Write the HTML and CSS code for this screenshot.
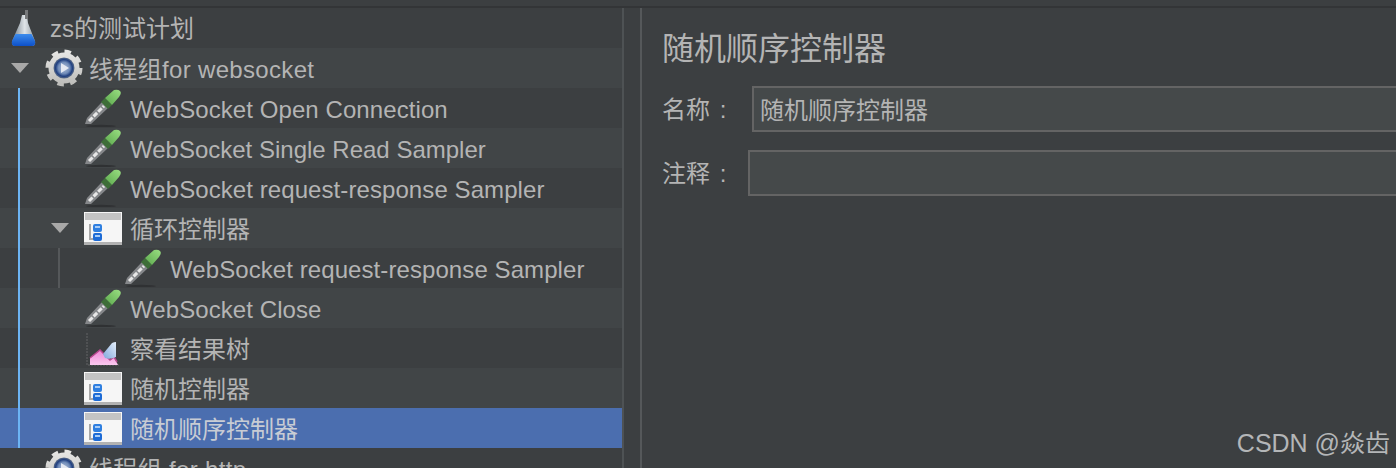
FILE: index.html
```html
<!DOCTYPE html>
<html lang="en">

<head>
    <meta charset="UTF-8">
    <meta name="viewport" content="width=device-width, initial-scale=1.0">
    <title>zs的测试计划</title>

    <link rel="stylesheet" href="styles.css">
</head>

<body>
    <svg class="icon-defs" width="0" height="0">
        <defs>
            <linearGradient id="liquid" x1="0" y1="0" x2="0" y2="1">
                <stop offset="0" stop-color="#3d8cec"/>
                <stop offset="1" stop-color="#0d50c8"/>
            </linearGradient>
            <linearGradient id="glass" x1="0" y1="0" x2="1" y2="0">
                <stop offset="0" stop-color="#6f7a84"/>
                <stop offset="0.55" stop-color="#dfe4e8"/>
                <stop offset="1" stop-color="#8f99a1"/>
            </linearGradient>
            <linearGradient id="bulb" x1="0" y1="1" x2="1" y2="0">
                <stop offset="0" stop-color="#5aa84c"/>
                <stop offset="1" stop-color="#9ade82"/>
            </linearGradient>
            <linearGradient id="pink" x1="0" y1="0" x2="0" y2="1">
                <stop offset="0" stop-color="#ee86d6"/>
                <stop offset="1" stop-color="#fbc8ef"/>
            </linearGradient>
            <linearGradient id="drop" x1="0" y1="1" x2="1" y2="0">
                <stop offset="0" stop-color="#7fa8dc"/>
                <stop offset="1" stop-color="#e4eefa"/>
            </linearGradient>
            <linearGradient id="tooth" x1="0" y1="0" x2="0" y2="1">
                <stop offset="0" stop-color="#e6e6e4"/>
                <stop offset="1" stop-color="#bdbdba"/>
            </linearGradient>
            <radialGradient id="gear-core">
                <stop offset="0" stop-color="#b4c2da"/>
                <stop offset="0.55" stop-color="#6f8bb8"/>
                <stop offset="0.8" stop-color="#1f3f80"/>
                <stop offset="1" stop-color="#5f6f88"/>
            </radialGradient>

            <symbol id="i-flask" viewBox="0 0 28 38">
                <path d="M12 6L17 6 18 14 25 32Q26 37 22 37L5 37Q1 37 2 32L10 14z" fill="url(#glass)"/>
                <path d="M5.500 25L21.500 25 25 32Q26 37 22 37L5 37Q1 37 2 32z" fill="url(#liquid)"/>
                <path d="M15 1h3v9h-3z" fill="#77797b"/>
            </symbol>

            <symbol id="i-gear" viewBox="0 0 38 38">
                <circle cx="19" cy="19" r="15.500" fill="url(#tooth)"/>
                <circle cx="19" cy="19" r="16.500" fill="none" stroke="url(#tooth)" stroke-width="4" stroke-dasharray="6.500 6.460"/>
                <circle cx="19" cy="19" r="10.500" fill="url(#gear-core)"/>
                <path d="M16 14l8 5-8 5z" fill="#e4e9f2"/>
            </symbol>

            <symbol id="i-dropper" viewBox="0 0 38 38">
                <ellipse cx="17" cy="37" rx="15" ry="1.200" fill="#2f3133"/>
                <path d="M1 35L3 29 18 13 24 19 7 35z" fill="#85878a"/>
                <path d="M5 32L20 17" fill="none" stroke="#e8e8e8" stroke-width="3" stroke-dasharray="5 1.500"/>
                <path d="M17 13L21 9 28 16 24 20z" fill="#3e6e38"/>
                <path d="M21 9L30 1Q34 0 36 2T35 8L28 16z" fill="url(#bulb)"/>
            </symbol>

            <symbol id="i-control" viewBox="0 0 38 33">
                <rect width="38" height="33" fill="#f6f6f6"/>
                <rect x="1" y="1" width="36" height="7" fill="#c4c4c4"/>
                <rect y="30" width="38" height="3" fill="#b2b2b2"/>
                <path d="M6 12v15h4" fill="none" stroke="#a8a8a8" stroke-width="2"/>
                <rect x="9" y="12" width="9" height="8" rx="2" fill="#2f7fe0"/>
                <rect x="9" y="21" width="9" height="8" rx="2" fill="#1d6bd6"/>
                <rect x="11" y="14" width="5" height="2" fill="#a8ccf6"/>
                <rect x="11" y="23" width="5" height="2" fill="#a8ccf6"/>
            </symbol>

            <symbol id="i-chart" viewBox="0 0 34 36">
                <path d="M1 3V35H33" fill="none" stroke="#55585a" stroke-width="1.500" stroke-dasharray="2 1"/>
                <path d="M4 35V28L14 20 18 24 24 30 28 27 32 35z" fill="url(#pink)"/>
                <path d="M4 28L14 20 18 24 24 30 28 27 31 32" fill="none" stroke="#b8488f" stroke-width="1.500"/>
                <path d="M17 24L26 13Q28 12 30 12L30 27Q24 30 19 28z" fill="url(#drop)"/>
            </symbol>
        </defs>
    </svg>

    <div class="top-line"></div>

    <div class="main">
        <div class="tree">
            <div class="guide"></div>

            <div class="row">
                <svg class="icon flask"><use href="#i-flask"/></svg>
                <span class="label label-top">zs的测试计划</span>
            </div>
            <div class="row stripe">
                <span class="arrow arrow-group"></span>
                <svg class="icon gear"><use href="#i-gear"/></svg>
                <span class="label label-group">线程组for websocket</span>
            </div>
            <div class="row child">
                <svg class="icon dropper"><use href="#i-dropper"/></svg>
                <span class="label label-latin label-wide">WebSocket Open Connection</span>
            </div>
            <div class="row stripe child">
                <svg class="icon dropper"><use href="#i-dropper"/></svg>
                <span class="label label-latin">WebSocket Single Read Sampler</span>
            </div>
            <div class="row child">
                <svg class="icon dropper"><use href="#i-dropper"/></svg>
                <span class="label label-latin label-wide">WebSocket request-response Sampler</span>
            </div>
            <div class="row stripe child">
                <span class="arrow arrow-child"></span>
                <svg class="icon control"><use href="#i-control"/></svg>
                <span class="label label-cjk">循环控制器</span>
            </div>
            <div class="row nested">
                <svg class="icon dropper"><use href="#i-dropper"/></svg>
                <span class="label label-latin label-wide">WebSocket request-response Sampler</span>
            </div>
            <div class="row stripe child">
                <svg class="icon dropper"><use href="#i-dropper"/></svg>
                <span class="label label-latin label-wide">WebSocket Close</span>
            </div>
            <div class="row child">
                <svg class="icon chart"><use href="#i-chart"/></svg>
                <span class="label label-cjk">察看结果树</span>
            </div>
            <div class="row stripe child">
                <svg class="icon control"><use href="#i-control"/></svg>
                <span class="label label-cjk">随机控制器</span>
            </div>
            <div class="row selected child">
                <svg class="icon control"><use href="#i-control"/></svg>
                <span class="label label-cjk">随机顺序控制器</span>
            </div>
            <div class="row">
                <span class="arrow-space"></span>
                <svg class="icon gear"><use href="#i-gear"/></svg>
                <span class="label label-group">线程组 for http</span>
            </div>
        </div>

        <div class="splitter"></div>

        <div class="panel">
            <h1 class="panel-title">随机顺序控制器</h1>
            <div class="field field-name">
                <span class="field-label">名称 :</span>
                <div class="field-input">随机顺序控制器</div>
            </div>
            <div class="field field-note">
                <span class="field-label">注释 :</span>
                <div class="field-input"></div>
            </div>
        </div>
    </div>

    <div class="watermark">CSDN @焱齿</div>
</body>

</html>
```

FILE: styles.css
```css
* {
    box-sizing: border-box;
}

body {
    margin: 0;
    height: 468px;
    overflow: hidden;
    position: relative;
    background-color: #3c3f41;
    color: #b4b4b4;
    font-family: "Liberation Sans", "Noto Sans CJK SC", sans-serif;
    font-size: 24px;
}

.icon-defs {
    position: absolute;
}

.top-line {
    height: 8px;
    background-color: #3c3f41;
    border-bottom: 2px solid #333537;
}

.main {
    display: flex;
    height: 460px;
}

.tree {
    position: relative;
    width: 622px;
    flex-shrink: 0;
    overflow: hidden;
}

.guide {
    position: absolute;
    left: 18px;
    top: 80px;
    width: 2px;
    height: 360px;
    background-color: #6cb4f4;
    z-index: 1;
}

.row {
    display: flex;
    align-items: center;
    height: 40px;
    padding-left: 10px;
    white-space: nowrap;
}

.stripe {
    background-color: #414547;
}

.selected {
    background-color: #4b6eaf;
    color: #c8ccd4;
}

.child {
    padding-left: 84px;
    position: relative;
}

.nested {
    padding-left: 124px;
    position: relative;
}

.nested::before {
    content: "";
    position: absolute;
    left: 58px;
    top: 0;
    width: 2px;
    height: 40px;
    background-color: #55585a;
}

/* the latin and cjk fonts sit at different heights in the row */
.label-latin {
    padding-top: 4px;
}

.label-wide {
    letter-spacing: 0.08px;
}

.label-cjk {
    padding-bottom: 2px;
}

.label-top {
    padding-bottom: 4px;
}

.label-group {
    margin-left: -2px;
    padding-bottom: 2px;
    letter-spacing: 0.33px;
}

.arrow {
    width: 0;
    height: 0;
    border-left: 9px solid transparent;
    border-right: 9px solid transparent;
    border-top: 10px solid #a8a8a8;
}

.arrow-group {
    margin-left: 1px;
    margin-right: 16px;
}

.arrow-child {
    position: absolute;
    left: 51px;
}

.arrow-space {
    width: 35px;
}

.icon {
    flex-shrink: 0;
    width: 38px;
    height: 38px;
    margin-right: 8px;
    filter: blur(0.5px);
}

.flask {
    width: 28px;
    margin-right: 12px;
}

.control {
    height: 33px;
}

.chart {
    height: 36px;
}

.splitter {
    width: 20px;
    flex-shrink: 0;
    border-left: 2px solid #4e5254;
    border-right: 2px solid #55585a;
}

.panel {
    flex: 1;
    padding: 20px 0 0 21px;
    min-width: 0;
    margin-left: -1px;
}

.panel-title {
    margin: 0 0 16px;
    font-size: 32px;
    font-weight: normal;
    line-height: 42px;
}

.field {
    display: flex;
    align-items: center;
    height: 46px;
}

.field-name {
    margin-bottom: 18px;
}

.field-label {
    flex-shrink: 0;
    white-space: nowrap;
    word-spacing: 3px;
    padding-bottom: 4px;
}

.field-name .field-label {
    width: 90px;
}

.field-note .field-label {
    width: 86px;
}

.field-input {
    flex: 1;
    height: 46px;
    padding: 0 6px;
    line-height: 45px;
    background-color: #45494a;
    border: 2px solid #646464;
    border-right: none;
}

.watermark {
    position: absolute;
    right: 6px;
    bottom: 9px;
    color: #b4b6b8;
    white-space: nowrap;
    font-size: 25px;
}
```
